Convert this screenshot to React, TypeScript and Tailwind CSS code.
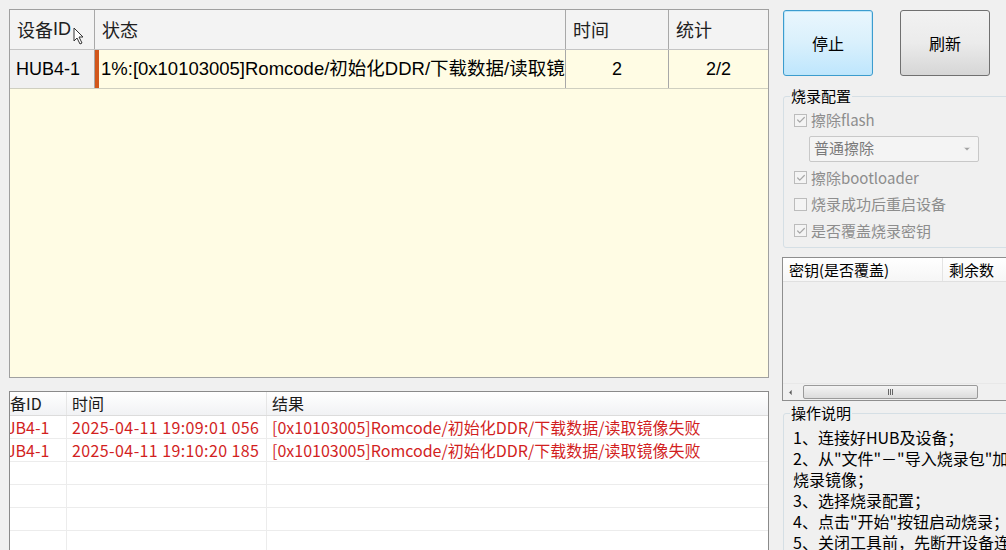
import { ChevronDown, ChevronLeft, Check } from 'lucide-react'

const cjk = { fontFamily: '"Noto Sans CJK SC", "Noto Sans", sans-serif' }

interface LogRow {
  id: string
  time: string
  result: string
}

const logs: LogRow[] = [
  { id: 'JB4-1', time: '2025-04-11 19:09:01 056', result: '[0x10103005]Romcode/初始化DDR/下载数据/读取镜像失败' },
  { id: 'JB4-1', time: '2025-04-11 19:10:20 185', result: '[0x10103005]Romcode/初始化DDR/下载数据/读取镜像失败' },
]

function CheckItem({ label, checked }: { label: string; checked: boolean }): JSX.Element {
  return (
    <div className="flex h-[26.5px] items-center gap-[4px] text-[15px] text-[#8d8d8d]">
      <span className="flex h-[13px] w-[13px] items-center justify-center border border-[#bcbcbc] bg-[#f4f4f4]">
        {checked ? <Check className="h-[10px] w-[10px] text-[#a8a8a8]" strokeWidth={3} /> : null}
      </span>
      <span>{label}</span>
    </div>
  )
}

function App(): JSX.Element {
  return (
    <div className="flex h-[550px] w-[1006px] overflow-hidden bg-[#f0f0f0]" style={cjk}>
      {/* left side */}
      <div className="flex w-[769px] shrink-0 flex-col pl-[9px] pt-[9px]">
        <div
          className="flex h-[369px] shrink-0 flex-col border border-[#a0a0a0] bg-[#fffce4]"
          style={{ fontFamily: '"Liberation Sans", "Noto Sans CJK SC", sans-serif' }}
        >
          <div className="flex h-[40px] shrink-0 border-b border-[#c4c4c4] bg-[#f3f3f3] text-[18px] text-[#202020]">
            <div className="flex w-[85px] items-center border-r border-[#a8a8a8] pl-[7px]">
              <span style={cjk}>设备</span>ID
              <svg className="ml-[2px] mt-[12px] h-[18px] w-[12px] shrink-0" viewBox="0 0 12 18">
                <path d="M1 1 L1 14 L4 11 L7 17 L9 16 L6 10 L10 10 Z" fill="#fff" stroke="#333" strokeWidth="1" />
              </svg>
            </div>
            <div className="flex w-[471px] items-center border-r border-[#a8a8a8] pl-[7px]" style={cjk}>状态</div>
            <div className="flex w-[103px] items-center border-r border-[#a8a8a8] pl-[7px]" style={cjk}>时间</div>
            <div className="flex flex-1 items-center pl-[7px]" style={cjk}>统计</div>
          </div>
          <div className="flex h-[39px] shrink-0 border-b border-[#cfcfc0] text-[18px] text-black">
            <div className="flex w-[85px] items-center border-r border-[#a8a8a8] bg-[#f0f0f0] pl-[6px]">HUB4-1</div>
            <div className="flex w-[471px] items-center overflow-hidden whitespace-nowrap border-l-[4px] border-r border-l-[#d2571c] border-r-[#a8a8a8] pl-[2px] text-[18.5px]">
              1%:[0x10103005]Romcode/初始化DDR/下载数据/读取镜像失败
            </div>
            <div className="flex w-[103px] items-center justify-center border-r border-[#a8a8a8]">2</div>
            <div className="flex flex-1 items-center justify-center">2/2</div>
          </div>
          <div className="flex-1" />
        </div>

        <div className="mt-[13px] flex flex-1 flex-col border border-[#8a8a8a] bg-white text-[16px]">
          <div className="flex h-[24px] shrink-0 border-b border-[#dcdcdc] bg-gradient-to-b from-white to-[#f1f2f4] text-[#1a1a1a]">
            <div className="w-[57px] overflow-hidden whitespace-nowrap border-r border-[#e6e6e6] leading-[23px]">
              <span className="ml-[-16px]">设备ID</span>
            </div>
            <div className="w-[200px] border-r border-[#e6e6e6] pl-[5px] leading-[23px]">时间</div>
            <div className="flex-1 pl-[5px] leading-[23px]">结果</div>
          </div>
          {[0, 1, 2, 3, 4, 5].map((i) => {
            const row = logs[i]
            return (
              <div key={i} className="flex h-[23px] shrink-0 border-b border-[#ececec] text-[#d21f1f]">
                <div className="w-[57px] overflow-hidden whitespace-nowrap border-r border-[#ececec] leading-[22px]">
                  {row ? <span className="ml-[-3px]">{row.id}</span> : null}
                </div>
                <div className="w-[200px] border-r border-[#ececec] pl-[5px] leading-[22px] tracking-[0.4px]">{row?.time}</div>
                <div className="flex-1 whitespace-nowrap pl-[5px] leading-[22px]">{row?.result}</div>
              </div>
            )
          })}
        </div>
      </div>

      {/* right side */}
      <div className="flex flex-1 flex-col pl-[13px] pt-[10px]">
        <div className="flex shrink-0 gap-[27px] pl-[1px]">
          <button
            type="button"
            className="flex h-[66px] w-[90px] items-center justify-center rounded-[3px] border border-[#3c9ccf] bg-gradient-to-b from-[#eaf6fd] via-[#d9f0fc] to-[#bee6fd] text-[16px] text-black shadow-[inset_0_0_0_1px_#bfe6f8]"
          >
            停止
          </button>
          <button
            type="button"
            className="flex h-[66px] w-[90px] items-center justify-center rounded-[3px] border border-[#707070] bg-gradient-to-b from-[#f2f2f2] via-[#ebebeb] to-[#d6d6d6] text-[16px] text-black"
          >
            刷新
          </button>
        </div>

        <div className="relative ml-[1px] mt-[20px] h-[152px] w-[240px] shrink-0 rounded-[3px] border border-[#d5dfe5] pl-[10px] pt-[10px]">
          <span className="absolute left-[6px] top-[-12px] bg-[#f0f0f0] px-[1px] text-[15px] text-black">烧录配置</span>
          <CheckItem label="擦除flash" checked />
          <div className="ml-[15px] mt-[2px] flex h-[26px] w-[170px] items-center justify-between rounded-[2px] border border-[#c8c8c8] bg-[#f4f4f4] pl-[4px] pr-[6px] text-[15px] text-[#7a7a7a]">
            <span>普通擦除</span>
            <ChevronDown className="h-[10px] w-[10px] text-[#a0a0a0]" fill="#a0a0a0" strokeWidth={1} />
          </div>
          <div className="mt-[3px]">
            <CheckItem label="擦除bootloader" checked />
            <CheckItem label="烧录成功后重启设备" checked={false} />
            <CheckItem label="是否覆盖烧录密钥" checked />
          </div>
        </div>

        <div className="mt-[9px] flex h-[144px] w-[240px] shrink-0 flex-col border border-[#8e8e8e] bg-[#f0f0f0]">
          <div className="flex h-[24px] shrink-0 border-b border-[#e0e0e0] bg-gradient-to-b from-white to-[#f6f6f6] text-[15px] text-black">
            <div className="w-[160px] border-r border-[#e4e4e4] pl-[6px] leading-[23px]">密钥(是否覆盖)</div>
            <div className="flex-1 pl-[6px] leading-[23px]">剩余数</div>
          </div>
          <div className="flex-1" />
          <div className="flex h-[17px] shrink-0 items-center border-t border-[#e8e8e8] bg-[#f0f0f0]">
            <ChevronLeft className="ml-[3px] h-[9px] w-[9px] text-[#555]" fill="#555" strokeWidth={1} />
            <div className="ml-[8px] flex h-[14px] w-[175px] items-center justify-center rounded-[2px] border border-[#9a9a9a] bg-gradient-to-b from-[#f4f4f4] to-[#dcdcdc]">
              <span className="flex gap-[1px]">
                <span className="h-[6px] w-[1px] bg-[#666]" />
                <span className="h-[6px] w-[1px] bg-[#666]" />
                <span className="h-[6px] w-[1px] bg-[#666]" />
              </span>
            </div>
          </div>
        </div>

        <div className="relative ml-[1px] mt-[12px] w-[240px] flex-1 rounded-[3px] border border-[#d5dfe5] pl-[9px] pt-[13px] text-[16px] leading-[21px] text-black">
          <span className="absolute left-[6px] top-[-12px] bg-[#f0f0f0] px-[1px] text-[15px]">操作说明</span>
          <div className="w-[230px]">
            <div className="whitespace-nowrap">1、连接好HUB及设备；</div>
            <div className="whitespace-nowrap">2、从"文件"－"导入烧录包"加载</div>
            <div className="whitespace-nowrap">烧录镜像；</div>
            <div className="whitespace-nowrap">3、选择烧录配置；</div>
            <div className="whitespace-nowrap">4、点击"开始"按钮启动烧录；</div>
            <div className="whitespace-nowrap">5、关闭工具前，先断开设备连</div>
            <div className="whitespace-nowrap">接，再"停止"烧录。</div>
          </div>
        </div>
      </div>
    </div>
  )
}

export default App
